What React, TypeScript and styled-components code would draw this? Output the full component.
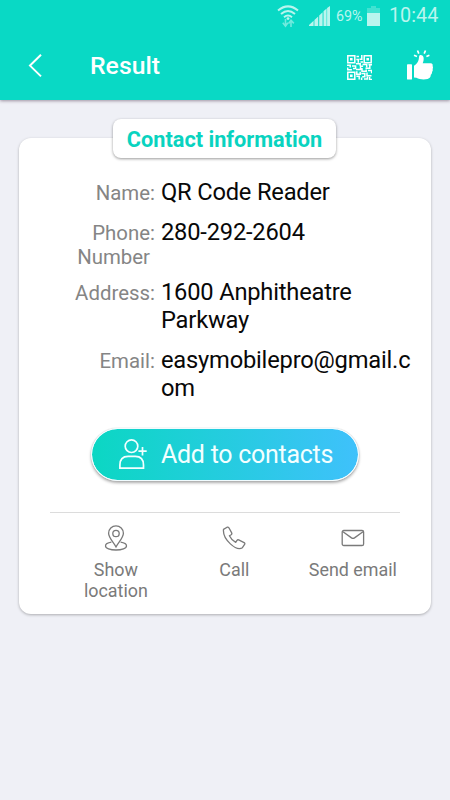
import React from "react";
import styled, { createGlobalStyle } from "styled-components";

const GlobalStyle = createGlobalStyle`
  *, *::before, *::after { box-sizing: border-box; }
  body { margin: 0; background: #eff0f6; font-family: Roboto, sans-serif; }
  svg { display: block; flex: none; }
`;

const Screen = styled.div`
  width: 450px;
  height: 800px;
  background: #eff0f6;
  overflow: hidden;
`;

const Header = styled.header`
  height: 100px;
  background: #09d9c5;
  box-shadow: 0 1px 3px rgba(60, 30, 60, 0.45);
`;

const StatusBar = styled.div`
  height: 32px;
  padding: 0 11px 0 0;
  display: flex;
  justify-content: flex-end;
  align-items: center;
  color: #b9f5ee;
`;

const Percent = styled.span`
  font-size: 14.3px;
  margin: 0 3px 0 6px;
  width: 28px;
  white-space: nowrap;
`;

const Clock = styled.span`
  font-size: 19.8px;
  line-height: 32px;
  margin-left: 9px;
  width: 50px;
  white-space: nowrap;
`;

const Toolbar = styled.div`
  height: 68px;
  padding: 0 16px 0 25px;
  display: flex;
  align-items: center;
`;

const Title = styled.h1`
  margin: 0 auto 0 45px;
  font-size: 24.8px;
  font-weight: 500;
  line-height: 68px;
  color: #fff;
`;

const ToolIcon = styled.span<{ $gap: number; $drop?: number }>`
  margin-right: ${(p) => p.$gap}px;
  padding-top: ${(p) => p.$drop ?? 0}px;
`;

const Card = styled.main`
  width: 412px;
  height: 476px;
  margin: 38px 0 0 19px;
  background: #fff;
  border-radius: 12px;
  box-shadow: 0 1px 3px rgba(0, 0, 0, 0.28);
  display: flex;
  flex-direction: column;
`;

const Badge = styled.h2`
  width: 223px;
  height: 39px;
  margin: -19px 0 0 94px;
  border-radius: 8px;
  background: #fff;
  box-shadow: 0 1px 3px rgba(0, 0, 0, 0.4);
  color: #09d3c0;
  font-size: 21.7px;
  font-weight: 700;
  line-height: 41px;
  text-align: center;
  white-space: nowrap;
`;

const Details = styled.dl`
  margin: 20px 0 0;
  display: flex;
  flex-direction: column;
  gap: 12px;
`;

const DetailRow = styled.div`
  display: grid;
  grid-template-columns: 131px 5px 257px;
  align-items: baseline;
`;

const Label = styled.dt`
  margin-bottom: -3px;
  font-size: 20.4px;
  line-height: 24px;
  text-align: right;
  color: #858585;
`;

const Colon = styled(Label).attrs({ as: "span" })`
  text-align: left;
`;

const Value = styled.dd<{ $breakAll?: boolean }>`
  margin: 0 0 0 6px;
  font-size: 23.7px;
  letter-spacing: -0.2px;
  line-height: 28px;
  color: #080808;
  word-break: ${(p) => (p.$breakAll ? "break-all" : "normal")};
`;

const AddButton = styled.button`
  width: 268px;
  height: 53px;
  margin: 26px 0 0 72px;
  padding: 0 0 0 26px;
  border: 1px solid #f1fcff;
  border-radius: 27px;
  background: linear-gradient(90deg, #0bd7c3, #3fc1fb) padding-box;
  box-shadow: 0 2px 3px rgba(0, 0, 0, 0.32), 0 0 1px rgba(0, 0, 0, 0.3);
  display: flex;
  align-items: center;
  gap: 13px;
  color: #f3ffff;
  font: 400 25px/50px Roboto, sans-serif;
  letter-spacing: -0.27px;
  white-space: nowrap;
`;

const Divider = styled.hr`
  width: 350px;
  height: 1px;
  margin: 31px 0 0 31px;
  border: 0;
  background: #dcdcdc;
`;

const Actions = styled.nav`
  margin: 10px 0 0 37.6px;
  display: grid;
  grid-template-columns: repeat(3, 118.5px);
`;

const Action = styled.a`
  display: flex;
  flex-direction: column;
  align-items: center;
  color: #7a7a7a;
  font-size: 17.9px;
  line-height: 21px;
  text-align: center;
`;

const ActionIcon = styled.span`
  height: 30px;
  margin-bottom: 6px;
  display: flex;
  align-items: center;
`;

const ActionText = styled.span<{ $width?: number }>`
  width: ${(p) => (p.$width ? `${p.$width}px` : "auto")};
`;

const WifiIcon = () => (
  <svg width="22" height="24" viewBox="0 0 22 24" fill="none" stroke="currentColor" strokeWidth="2">
    <path d="M1 6.6Q11-1.8 21 6.6M4 10Q11 4 18 10M7 13.2q4-3.4 8 0" />
    <circle cx="11" cy="14.6" r="1.4" fill="currentColor" stroke="none" />
    <path d="M8.5 15v7M5.8 18.8l2.7 3.4 2.4-3.4M14 23v-6M11.6 19.4l2.4-3.2 2.8 3.2" opacity=".6" strokeWidth="1.6" />
  </svg>
);

const SignalIcon = () => (
  <svg width="21" height="20" viewBox="0 0 21 20" fill="currentColor">
    <path d="M0 20v-1l4.6-4.2V20zM5.4 20v-6L9.2 10.4V20zM10.2 20V9.4l3.4-3.2V20zM14.5 20V5.3L17.6 2.4V20zM18.1 20V2L21 0v20z" />
  </svg>
);

const BatteryIcon = () => (
  <svg width="13" height="20" viewBox="0 0 13 20" fill="currentColor">
    <path d="M4 0h5v2h4v5H0V2h4z" opacity=".32" />
    <path d="M0 7h13v13H0z" />
  </svg>
);

const BackIcon = () => (
  <svg width="20" height="26" viewBox="0 0 20 26" fill="none" stroke="#fff" strokeWidth="2">
    <path d="M16 1.8 5 12.6l11 10.8" />
  </svg>
);

const QrIcon = () => (
  <svg width="25" height="25" viewBox="0 0 25 25" fill="none" stroke="#fff" strokeWidth="1.5">
    <path d="M.8.8h7v7h-7zM17.2.8h7v7h-7zM.8 17.2h7v7h-7z" />
    <path
      fill="#fff"
      stroke="none"
      d="M3 3h2.6v2.6H3zM19.4 3H22v2.6h-2.6zM3 19.4h2.6V22H3z"
    />
    <path d="M9.5 1.5h2.5M14.8 0v4.2H12.5M9.3 4.5h2v3.2M13.5 7h2.6M9 8.7h4.2v2.2M0 10.2h3.2v2.3M5 11h3.6v2.4H6M.7 12.5v2.3h4.2M9 14.6h4.5v-3.4h2.6M15.5 9.4h4.2v2.8M21.5 9.7H25M22.8 10v3.2h-4.3M9.8 16.2v3h3.4v-2.4M15 13v3.2h4.2v-1.8M21 15.4h3.6v2.8M9.4 21.2h2.8v3.2M14.4 18.5h3.4v3.2h-2.6M20 17.5v3.3h4.5M14.6 22.6V25M17 24h3.4v-2.2M22.6 22v2.5H25" />
  </svg>
);

const ThumbIcon = () => (
  <svg width="28" height="32" viewBox="0 0 28 32">
    <rect x="1" y="14.2" width="5" height="15.4" rx=".7" fill="#fff" />
    <path
      d="M8 15.7c2.5-1.6 4.2-3.6 4.7-6.2l.4-3.1c.3-2 3.7-1.7 4.4.8.5 2-.1 4.3-.8 6.1h8c1.7 0 2.4 1.4 1.9 2.8.5.8.6 1.9 0 2.9.4 1 .2 2.2-.6 3 .2 1.2-.3 2.1-1.2 2.7 0 2-1 3.6-3.2 4.3-4 .9-8.2.4-11.2-1.2L8 27.5z"
      fill="#fff"
    />
    <path d="M12.8 3.6 11.5.5M18.2 3.6 19.5.5M11 6.5 8 5.3M20.4 6.5l3-1.2" fill="none" stroke="#fff" strokeWidth="1.7" />
  </svg>
);

const AddPersonIcon = () => (
  <svg width="30" height="32" viewBox="0 0 30 32" fill="none" stroke="#f3ffff" strokeWidth="1.7">
    <circle cx="13.5" cy="7.2" r="6.3" />
    <path d="M1.9 29.1V26q0-8.7 8.2-8.7h7.2q8.2 0 8.2 8.7v3.1zM20.4 12.2h8.3M24.5 8v8.4" />
  </svg>
);

const PinIcon = () => (
  <svg width="24" height="26" viewBox="0 0 24 26" fill="none" stroke="currentColor" strokeWidth="1.3">
    <path d="M12 22C9.4 17.2 4.6 12.7 4.6 8.3a7.4 7.4 0 0 1 14.8 0C19.4 12.7 14.6 17.2 12 22Z" />
    <circle cx="12" cy="8.5" r="3.2" />
    <path d="M7.4 17.2C3.4 17.8 1.5 19.2 1.5 21c0 2.3 4.6 4 10.5 4s10.5-1.7 10.5-4c0-1.8-1.9-3.2-5.9-3.8" />
  </svg>
);

const PhoneIcon = () => (
  <svg width="24" height="24" viewBox="0 0 24 24" fill="none" stroke="currentColor" strokeWidth="1.3" strokeLinejoin="round">
    <path d="M1.5 3.4 5.1 1.2q1.1-.5 1.8.6l2.8 5.1q.5 1.1-.5 1.8L7.4 9.8c1.2 2.6 3.8 5.2 6.3 6.5l1.3-2q.7-.9 1.7-.4l5.4 2.7q1.2.7.5 1.8l-2.2 3.3c-5.8 3.9-20-8-18.9-18.3Z" />
  </svg>
);

const MailIcon = () => (
  <svg width="24" height="18" viewBox="0 0 24 18" fill="none" stroke="currentColor" strokeWidth="1.3">
    <rect x="1.2" y="1.5" width="21.4" height="15" rx="1.6" />
    <path d="m2 2.7 8.5 6.2q1.5 1 3 0L22 2.7" />
  </svg>
);

const details = [
  { label: "Name", value: "QR Code Reader" },
  { label: "Phone Number", value: "280-292-2604" },
  { label: "Address", value: "1600 Anphitheatre Parkway" },
  { label: "Email", value: "easymobilepro@gmail.com", breakAll: true },
];

const actions = [
  { text: "Show location", width: 70, icon: <PinIcon /> },
  { text: "Call", icon: <PhoneIcon /> },
  { text: "Send email", icon: <MailIcon /> },
];

export default function App() {
  return (
    <Screen>
      <GlobalStyle />
      <Header>
        <StatusBar>
          <ToolIcon $gap={10}><WifiIcon /></ToolIcon>
          <SignalIcon />
          <Percent>69%</Percent>
          <BatteryIcon />
          <Clock>10:44</Clock>
        </StatusBar>
        <Toolbar>
          <BackIcon />
          <Title>Result</Title>
          <ToolIcon $gap={34} $drop={2}><QrIcon /></ToolIcon>
          <ThumbIcon />
        </Toolbar>
      </Header>
      <Card>
        <Badge>Contact information</Badge>
        <Details>
          {details.map(({ label, value, breakAll }) => (
            <DetailRow key={label}>
              <Label>{label}</Label>
              <Colon>:</Colon>
              <Value $breakAll={breakAll}>{value}</Value>
            </DetailRow>
          ))}
        </Details>
        <AddButton>
          <AddPersonIcon />
          Add to contacts
        </AddButton>
        <Divider />
        <Actions>
          {actions.map(({ text, width, icon }) => (
            <Action key={text}>
              <ActionIcon>{icon}</ActionIcon>
              <ActionText $width={width}>{text}</ActionText>
            </Action>
          ))}
        </Actions>
      </Card>
    </Screen>
  );
}
